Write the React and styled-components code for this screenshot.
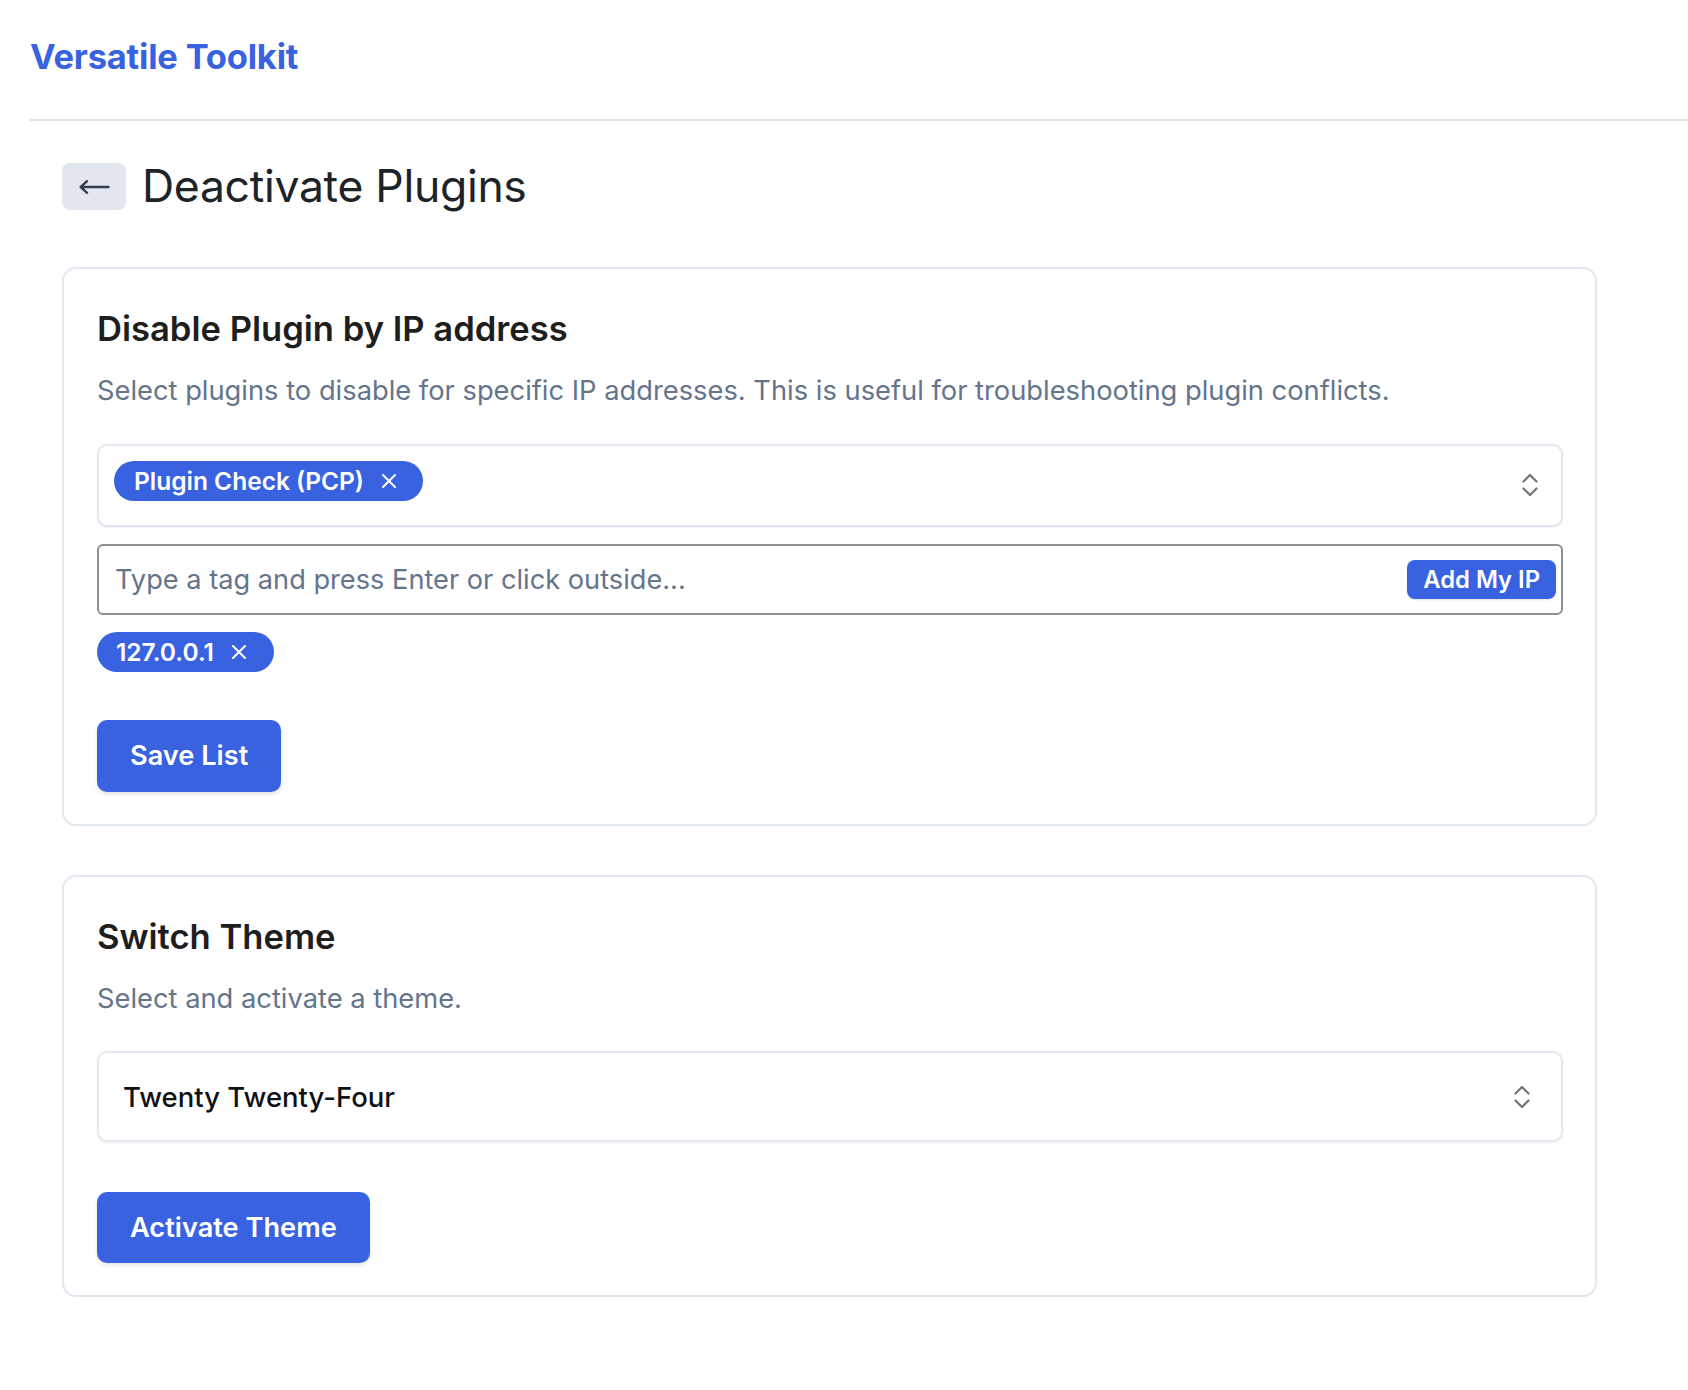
import React from "react";
import styled, { createGlobalStyle } from "styled-components";

const BLUE = "#3962e1";

const Global = createGlobalStyle`
  html, body { margin: 0; padding: 0; background: #ffffff; }
  body {
    font-family: Inter, "Noto Sans", "Liberation Sans", sans-serif;
    color: #1d2327;
    -webkit-font-smoothing: antialiased;
  }
  * { box-sizing: border-box; }
`;

const Page = styled.div`
  margin-left: 30px;
`;

const Header = styled.header`
  padding: 35px 0 40px;
  border-bottom: 2px solid #e2e4e8;
`;

const Brand = styled.div`
  font-size: 34.5px;
  line-height: 44px;
  font-weight: 700;
  color: ${BLUE};
  letter-spacing: -0.2px;
`;

const Content = styled.main`
  padding: 42px 91px 80px 32px;
`;

const TitleRow = styled.div`
  display: flex;
  align-items: center;
  gap: 16px;
  margin-bottom: 57px;
`;

const BackButton = styled.button`
  width: 64px;
  height: 47px;
  border: none;
  border-radius: 8px;
  background: #e2e7ef;
  display: flex;
  align-items: center;
  justify-content: center;
  padding: 0;
  cursor: pointer;
`;

const PageTitle = styled.h1`
  margin: 0;
  font-size: 44.5px;
  line-height: 47px;
  font-weight: 400;
  color: #1d2327;
  letter-spacing: -0.3px;
`;

const Card = styled.section`
  border: 2px solid #e2e8f0;
  border-radius: 14px;
  padding: 35px 32px 32px 33px;
  background: #fff;
  & + & {
    margin-top: 49px;
  }
`;

const CardTitle = styled.h2`
  margin: 0;
  font-size: 34.6px;
  line-height: 49px;
  font-weight: 600;
  color: #1e1e1e;
`;

const CardText = styled.p`
  margin: 17px 0 0;
  font-size: 27.3px;
  line-height: 42px;
  color: #64748b;
`;

const FieldStack = styled.div`
  margin-top: 31.5px;
  display: flex;
  flex-direction: column;
  gap: 17px;
`;

const SelectBox = styled.div`
  height: ${(p) => (p.$tall ? 91 : 83)}px;
  border: 2px solid #e2e8f0;
  border-radius: 10px;
  box-shadow: 0 1px 2px rgba(15, 23, 42, 0.06);
  background: #fff;
  display: flex;
  align-items: ${(p) => (p.$tall ? "center" : "flex-start")};
  justify-content: space-between;
  padding: ${(p) => (p.$tall ? "0 31px 0 24px" : "15px 23px 15px 15px")};
`;

const SelectValue = styled.span`
  font-size: 27.5px;
  font-weight: 500;
  color: #0f1115;
`;

const ChevronWrap = styled.span`
  align-self: center;
  display: flex;
`;

const TagList = styled.div`
  display: flex;
  flex-wrap: wrap;
  gap: 10px;
`;

const Tag = styled.span`
  display: inline-flex;
  align-items: center;
  gap: 18px;
  height: 40px;
  padding: 0 ${(p) => (p.$compact ? 28 : 27)}px 0 ${(p) => (p.$compact ? 19 : 20)}px;
  border-radius: 999px;
  background: ${BLUE};
  color: #fff;
  font-size: 24.5px;
  font-weight: 600;
  white-space: nowrap;
`;

const InputWrap = styled.div`
  height: 71px;
  border: 2px solid #8c8f94;
  border-radius: 6px;
  display: flex;
  align-items: center;
  padding: 0 5px 0 16px;
  background: #fff;
`;

const TagInput = styled.input`
  flex: 1;
  border: none;
  outline: none;
  background: transparent;
  font-family: inherit;
  font-size: 27.2px;
  color: #1e1e1e;
  padding: 0;
  &::placeholder {
    color: #64748b;
    opacity: 1;
  }
`;

const SmallButton = styled.button`
  height: 39px;
  padding: 0 16px;
  border: none;
  border-radius: 8px;
  background: ${BLUE};
  color: #fff;
  font-family: inherit;
  font-size: 23.8px;
  font-weight: 600;
  box-shadow: 0 1px 2px rgba(0, 0, 0, 0.12);
  cursor: pointer;
`;

const PrimaryButton = styled.button`
  display: inline-flex;
  align-items: center;
  height: 71.5px;
  margin-top: ${(p) => p.$gap}px;
  padding: 0 33px;
  border: none;
  border-radius: 10px;
  background: ${BLUE};
  color: #fff;
  font-family: inherit;
  font-size: 27.2px;
  font-weight: 600;
  box-shadow: 0 2px 4px rgba(0, 0, 0, 0.12);
  cursor: pointer;
`;

const ArrowIcon = () => (
  <svg width="31" height="14" viewBox="0 0 31 14" fill="none">
    <path d="M2 7H29.5" stroke="#363f4d" strokeWidth="2.4" strokeLinecap="round" />
    <path d="M8 1.2L1.8 7L8 12.8" stroke="#363f4d" strokeWidth="2.4" strokeLinecap="round" strokeLinejoin="round" />
  </svg>
);

const CloseIcon = () => (
  <svg width="14" height="14" viewBox="0 0 14 14" fill="none">
    <path d="M1 1L13 13M13 1L1 13" stroke="#ffffff" strokeWidth="2" strokeLinecap="round" />
  </svg>
);

const Chevrons = () => (
  <svg width="16" height="24" viewBox="0 0 16 24" fill="none">
    <path d="M1.5 8.5L8 2L14.5 8.5" stroke="#6f7479" strokeWidth="2.2" strokeLinecap="round" strokeLinejoin="round" />
    <path d="M1.5 15.5L8 22L14.5 15.5" stroke="#6f7479" strokeWidth="2.2" strokeLinecap="round" strokeLinejoin="round" />
  </svg>
);

export default function App() {
  return (
    <>
      <Global />
      <Page>
        <Header>
          <Brand>Versatile Toolkit</Brand>
        </Header>
        <Content>
          <TitleRow>
            <BackButton aria-label="Back">
              <ArrowIcon />
            </BackButton>
            <PageTitle>Deactivate Plugins</PageTitle>
          </TitleRow>

          <Card>
            <CardTitle>Disable Plugin by IP address</CardTitle>
            <CardText>
              Select plugins to disable for specific IP addresses. This is useful for troubleshooting plugin conflicts.
            </CardText>
            <FieldStack>
              <SelectBox>
                <TagList>
                  <Tag>
                    Plugin Check (PCP)
                    <CloseIcon />
                  </Tag>
                </TagList>
                <ChevronWrap>
                  <Chevrons />
                </ChevronWrap>
              </SelectBox>
              <InputWrap>
                <TagInput placeholder="Type a tag and press Enter or click outside..." />
                <SmallButton>Add My IP</SmallButton>
              </InputWrap>
              <TagList>
                <Tag $compact>
                  127.0.0.1
                  <CloseIcon />
                </Tag>
              </TagList>
            </FieldStack>
            <PrimaryButton $gap={48.5}>Save List</PrimaryButton>
          </Card>

          <Card>
            <CardTitle>Switch Theme</CardTitle>
            <CardText>Select and activate a theme.</CardText>
            <FieldStack>
              <SelectBox $tall>
                <SelectValue>Twenty Twenty-Four</SelectValue>
                <ChevronWrap>
                  <Chevrons />
                </ChevronWrap>
              </SelectBox>
            </FieldStack>
            <PrimaryButton $gap={49.5}>Activate Theme</PrimaryButton>
          </Card>
        </Content>
      </Page>
    </>
  );
}
